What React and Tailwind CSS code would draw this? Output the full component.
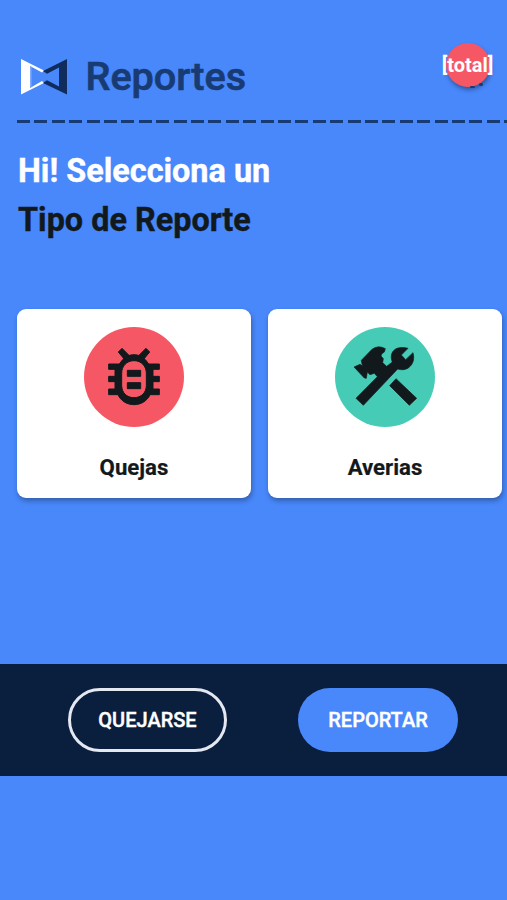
function Logo() {
    return (
        <svg className="w-[46px] h-[36px]" viewBox="0 0 46 36">
            <path fill="#ffffff" d="M0 0 L23 11.5 L21 13.5 L9 7 V29 L21 22 L23 24 L0 35.5Z" />
            <path fill="#7fabfc" d="M9 7 L10.5 8 V28 L9 29Z" />
            <path fill="#0f2c5c" d="M46 0 L22 12 L26 14.8 L38 8.5 V27.5 L26 21.2 L22 24 L46 35.5Z" />
        </svg>
    )
}

function BugIcon() {
    return (
        <svg className="w-[60px] h-[68px] mb-[2px]" viewBox="0 0 180 204" fill="currentColor" stroke="currentColor" strokeWidth="3">
            <path fillRule="evenodd" d="M90 38 C104 38 117 44 125 54 L134 66 H166 V82 H147 V103 H166 V119 H147 V141 H166 V158 H138 C130 176 112 188 90 188 C68 188 50 176 42 158 H14 V141 H33 V119 H14 V103 H33 V82 H14 V66 H46 L55 54 C63 44 76 38 90 38Z M90 56 C68 56 53 72 53 94 V130 C53 152 68 167 90 167 C112 167 127 152 127 130 V94 C127 72 112 56 90 56Z" />
            <path d="M43 30 L54 19 L76 41 L62 53Z M137 30 L126 19 L104 41 L118 53Z" />
            <path d="M70 85 H110 V103 H70Z M70 122 H110 V140 H70Z" />
        </svg>
    )
}

function ToolsIcon() {
    return (
        <svg className="w-[70px] h-[68px] mb-[2px]" viewBox="0 0 210 204" fill="currentColor" stroke="currentColor" strokeWidth="2">
            <path d="M12 75 L30 67 L37 72 L34 55 L66 22 Q84 8 106 20 L103 30 Q93 35 93 42 L100 50 L98 62 L110 73 L127 60 C119 42 126 25 141 19 C152 15 164 16 174 19 L154 39 L167 53 L189 32 C194 50 190 66 176 77 C165 85 153 84 143 81 L40 190 L18 169 L82 104 L73 94 L60 98 L52 90 L49 109 L43 108 Z" />
            <path d="M138 110 L200 169 L178 190 L119 131Z" />
        </svg>
    )
}

function Header() {
    return (
        <header className="pt-[54px] pl-[17px]">

            <div className="flex items-start h-[66px]">

                <div className="pt-[5px] pl-[4px]">
                    <Logo />
                </div>

                <h1 className="ml-[18.5px] text-[39.6px] leading-[45px] font-medium text-[#193b73] whitespace-nowrap [-webkit-text-stroke:0.7px_#193b73]">
                    Reportes
                </h1>

                {/* Total badge */}
                <div className="relative ml-auto mr-[17px] -mt-[11px] w-[44px] h-[44px] shrink-0 rounded-full bg-[#f55864] shadow-[1px_3px_4px_rgba(0,0,0,0.35)] flex items-center justify-center">
                    <span className="-ml-px text-[20px] font-bold text-white whitespace-nowrap">[total]</span>
                    <span className="absolute left-[24px] top-[43px] w-[5px] h-[2px] rounded-full bg-[#193b73]"></span>
                    <span className="absolute left-[33px] top-[40px] w-[4px] h-[3px] rounded-full bg-[#193b73]"></span>
                </div>

            </div>

            <div className="h-[3px] bg-[repeating-linear-gradient(90deg,#193b73_0_13px,transparent_13px_17.4px)]"></div>

        </header>
    )
}

function ReportCard({ icon, label, circle }) {
    return (
        <div className="w-[234px] h-[189px] shrink-0 bg-white rounded-[9px] shadow-[1px_3px_5px_rgba(0,0,0,0.3)] flex flex-col items-center pt-[18px]">

            <div className={`w-[100px] h-[100px] rounded-full flex items-center justify-center text-[#12191d] ${circle}`}>
                {icon}
            </div>

            <h3 className="mt-[26px] text-[22.2px] leading-[28px] font-bold text-[#12191d] [-webkit-text-stroke:0.2px_#12191d]">
                {label}
            </h3>

        </div>
    )
}

export default function App() {
    return (
        <div className="w-full h-[900px] overflow-hidden bg-[#4888fb] font-['Roboto',sans-serif] flex flex-col">

            <Header />

            <h2 className="h-[186px] pt-[24px] pl-[18px] text-[32.4px] leading-[49px] font-bold text-white [-webkit-text-stroke:0.4px_currentColor]">
                Hi! Selecciona un
                <span className="block text-[#12191d]">Tipo de Reporte</span>
            </h2>

            {/* Report types */}
            <div className="flex gap-[17px] pl-[17px]">
                <ReportCard label="Quejas" circle="bg-[#f55864]" icon={<BugIcon />} />
                <ReportCard label="Averias" circle="bg-[#46ccb6]" icon={<ToolsIcon />} />
            </div>

            {/* Actions */}
            <div className="mt-[166px] h-[112px] bg-[#0a1e3e] flex items-center gap-[71px] pl-[68px]">
                <button className="w-[159px] h-[64px] rounded-full border-[3px] border-[#e4e8f0] text-[20px] font-medium text-white [-webkit-text-stroke:0.4px_#ffffff]">
                    QUEJARSE
                </button>
                <button className="w-[160px] h-[64px] rounded-full bg-[#4888fb] text-[20px] font-medium text-white [-webkit-text-stroke:0.4px_#ffffff]">
                    REPORTAR
                </button>
            </div>

        </div>
    )
}
